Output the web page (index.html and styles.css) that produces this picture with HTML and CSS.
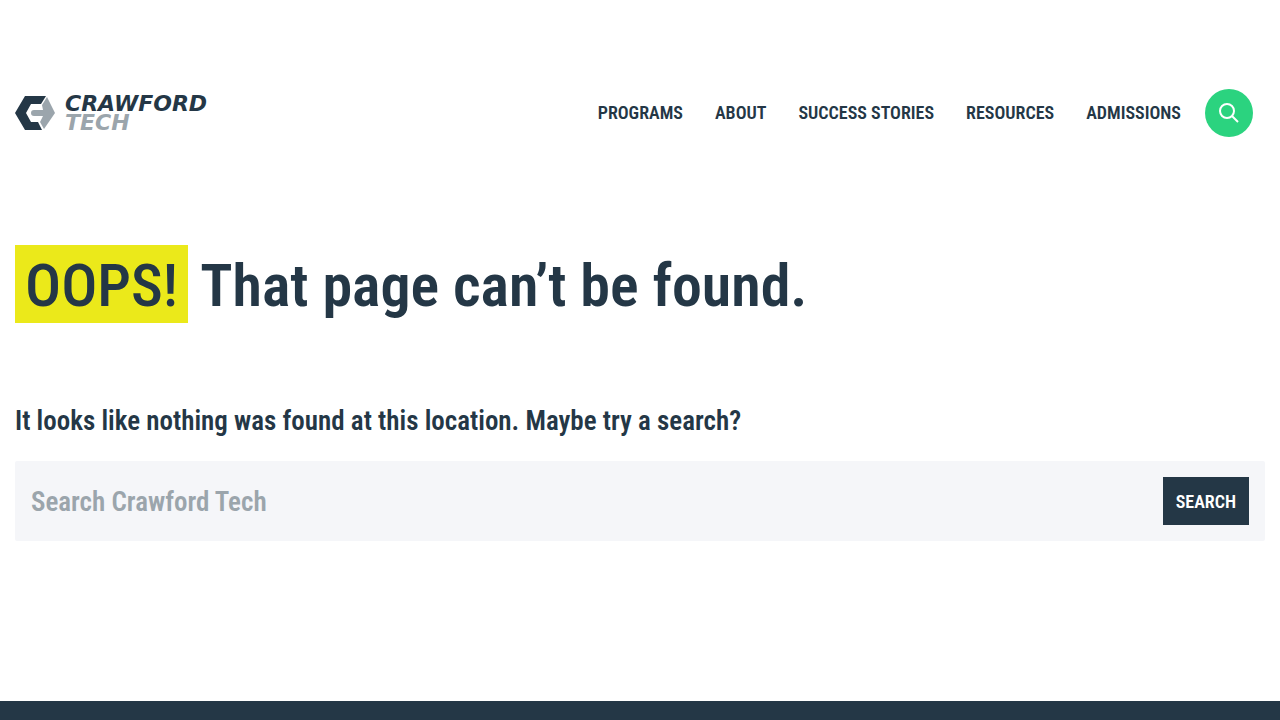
FILE: index.html
```html
<!DOCTYPE html>
<html lang="en">
<head>
    <meta charset="UTF-8">
    <meta name="viewport" content="width=device-width, initial-scale=1.0">
    <title>Page not found - Crawford Tech</title>
    <link rel="stylesheet" href="styles.css">
</head>
<body>
    <header class="site-header">
        <a class="logo" href="/" aria-label="Crawford Tech">
            <svg class="logo-mark" viewBox="0 0 40 34" aria-hidden="true">
                <path fill="#243746" d="M10 0H31L26 8H16L11 17L16 26H23L27 34H10L0 17Z"/>
                <path fill="#9ba5ac" d="M32 1L40 17L29 33L25 26L28 20H19Q16 20 16 17T19 14H28L27 9Z"/>
            </svg>
            <span class="logo-text">
                <span class="logo-name">CRAWFORD</span>
                <span class="logo-tech">TECH</span>
            </span>
        </a>
        <nav class="main-nav">
            <a href="#">PROGRAMS</a>
            <a href="#">ABOUT</a>
            <a href="#">SUCCESS STORIES</a>
            <a href="#">RESOURCES</a>
            <a href="#">ADMISSIONS</a>
        </nav>
        <button class="search-toggle" type="button" aria-label="Open search">
            <svg width="22" height="22" viewBox="0 0 22 22" fill="none" stroke="#fff" stroke-width="2" aria-hidden="true">
                <circle cx="9" cy="9" r="7"/>
                <path d="M14 14L20 20"/>
            </svg>
        </button>
    </header>

    <main class="content">
        <h1><span class="highlight">OOPS!</span> That page can’t be found.</h1>
        <p class="message">It looks like nothing was found at this location. Maybe try a search?</p>
        <form class="search-form" action="/" method="get">
            <input type="search" name="s" placeholder="Search Crawford Tech" aria-label="Search Crawford Tech">
            <button type="submit">SEARCH</button>
        </form>
    </main>

    <footer class="site-footer"></footer>
</body>
</html>
```
FILE: styles.css
```css
* {
    box-sizing: border-box;
}
body {
    margin: 0;
    min-height: 100vh;
    display: flex;
    flex-direction: column;
    font-family: "Roboto Condensed", "Liberation Sans Narrow", "Liberation Sans", sans-serif;
    font-weight: 600;
    color: #243746;
    background: #fff;
}
.site-header {
    display: flex;
    align-items: center;
    padding: 89px 27px 0 15px;
}
.logo {
    display: flex;
    align-items: center;
    gap: 10px;
    margin-right: auto;
    color: inherit;
    text-decoration: none;
}
.logo-mark {
    width: 40px;
    height: 34px;
}
.logo-text {
    display: flex;
    flex-direction: column;
    font-family: "DejaVu Sans", sans-serif;
    font-size: 22px;
    font-style: italic;
    font-weight: bold;
    line-height: 19px;
}
.logo-tech {
    color: #9ba5ac;
}
.main-nav {
    display: flex;
    gap: 32px;
    margin-right: 24px;
}
.main-nav a {
    color: inherit;
    font-size: 18px;
    line-height: 32px;
    text-decoration: none;
}
.search-toggle {
    display: flex;
    align-items: center;
    justify-content: center;
    width: 48px;
    height: 48px;
    padding: 0;
    border: 0;
    border-radius: 50%;
    background: #2bd37f;
    cursor: pointer;
}
.content {
    padding: 108px 15px 160px;
}
h1 {
    margin: 0;
    font-size: 60px;
    font-weight: 600;
    line-height: 74px;
}
.highlight {
    display: inline-block;
    padding: 4px 10px 0;
    background: #ebe91a;
    font-weight: 500;
}
.message {
    margin: 78px 0 20px;
    font-size: 27px;
    line-height: 40px;
}
.search-form {
    display: flex;
    align-items: center;
    padding: 16px;
    border-radius: 2px;
    background: #f5f6f9;
}
.search-form input {
    flex: 1;
    min-width: 0;
    height: 48px;
    padding: 2px 0 0;
    border: 0;
    outline: 0;
    background: transparent;
    color: inherit;
    font: inherit;
    font-size: 27px;
}
.search-form input::placeholder {
    color: #9ba5ac;
    opacity: 1;
}
.search-form button {
    height: 48px;
    padding: 0 13px;
    border: 0;
    background: #243746;
    color: #fff;
    font: inherit;
    font-size: 18px;
    cursor: pointer;
}
.site-footer {
    flex: 1;
    background: #243746;
}
```
